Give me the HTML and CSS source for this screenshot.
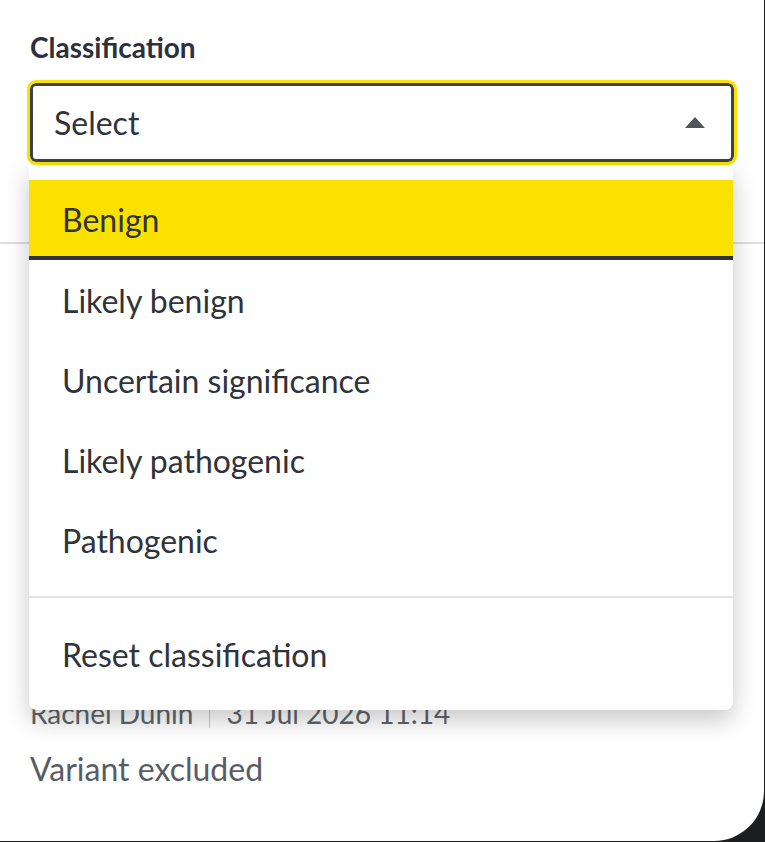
FILE: index.html
```html
<!DOCTYPE html>
<html>
<head>
<meta charset="utf-8">
<link rel="stylesheet" href="styles.css">
</head>
<body>
<div class="page">
  <div class="field">
    <div class="label">Classification</div>
    <div class="select-wrap">
      <div class="select">
        <span class="select-text">Select</span>
        <svg class="caret" width="20" height="11" viewBox="0 0 20 11"><path d="M0 11 L10 0 L20 11 Z" fill="#50545c"/></svg>
      </div>
      <div class="menu">
        <div class="option active">Benign</div>
        <div class="option">Likely benign</div>
        <div class="option">Uncertain significance</div>
        <div class="option">Likely pathogenic</div>
        <div class="option">Pathogenic</div>
        <div class="menu-sep"></div>
        <div class="option">Reset classification</div>
      </div>
    </div>
  </div>
  <div class="divider"></div>
  <div class="history">
    <div class="meta"><span>Rachel Dunin</span><span class="bar"></span><span>31 Jul 2026 11:14</span></div>
    <div class="status">Variant excluded</div>
  </div>
</div>
</body>
</html>
```
FILE: styles.css
```css
html, body {
  margin: 0;
  padding: 0;
}
body {
  background: #1b1d1f;
  width: 765px;
  height: 842px;
  overflow: hidden;
  font-family: "Lato", "Open Sans", sans-serif;
}
.page {
  width: 764px;
  height: 841px;
  background: #ffffff;
  border-bottom-right-radius: 50px;
  box-sizing: border-box;
  padding-top: 31px;
}
.field {
  padding: 0 27px;
}
.label {
  font-size: 28px;
  font-weight: 700;
  color: #2e313a;
  line-height: 32px;
  padding-left: 3px;
  margin-bottom: 17px;
}
.select-wrap {
  position: relative;
  width: 710px;
}
.select {
  height: 85px;
  box-sizing: border-box;
  border: 3px solid #fae100;
  border-radius: 9px;
  display: flex;
  box-shadow: inset 0 0 0 3px #3d414a;
  align-items: center;
  justify-content: space-between;
  padding: 0 29px 0 24px;
}
.select-text {
  font-size: 32px;
  color: #30333b;
}
.caret {
  display: block;
}
.menu {
  position: absolute;
  left: 2px;
  top: 85px;
  width: 704px;
  background: #ffffff;
  border-radius: 0 0 8px 8px;
  box-shadow: 0 10px 24px rgba(0, 0, 0, 0.22);
  padding: 15px 0 16px;
  z-index: 5;
}
.option {
  height: 80px;
  box-sizing: border-box;
  display: flex;
  align-items: center;
  padding-left: 33px;
  font-size: 32px;
  color: #30333b;
}
.option.active {
  background: #fae100;
  border-bottom: 4px solid #30333d;
  padding-top: 2px;
}
.menu-sep {
  height: 2px;
  background: #e3e3e3;
  margin: 16px 0;
}
.divider {
  height: 2px;
  background: #dedede;
  margin-top: 77px;
}
.history {
  padding: 451px 30px 0;
}
.meta {
  display: flex;
  align-items: center;
  font-size: 28px;
  color: #60646b;
  line-height: 36px;
}
.bar {
  width: 1px;
  height: 30px;
  background: #c9c9c9;
  margin: 0 16px;
}
.status {
  margin-top: 19px;
  font-size: 32px;
  color: #585c64;
  line-height: 38px;
}
```
